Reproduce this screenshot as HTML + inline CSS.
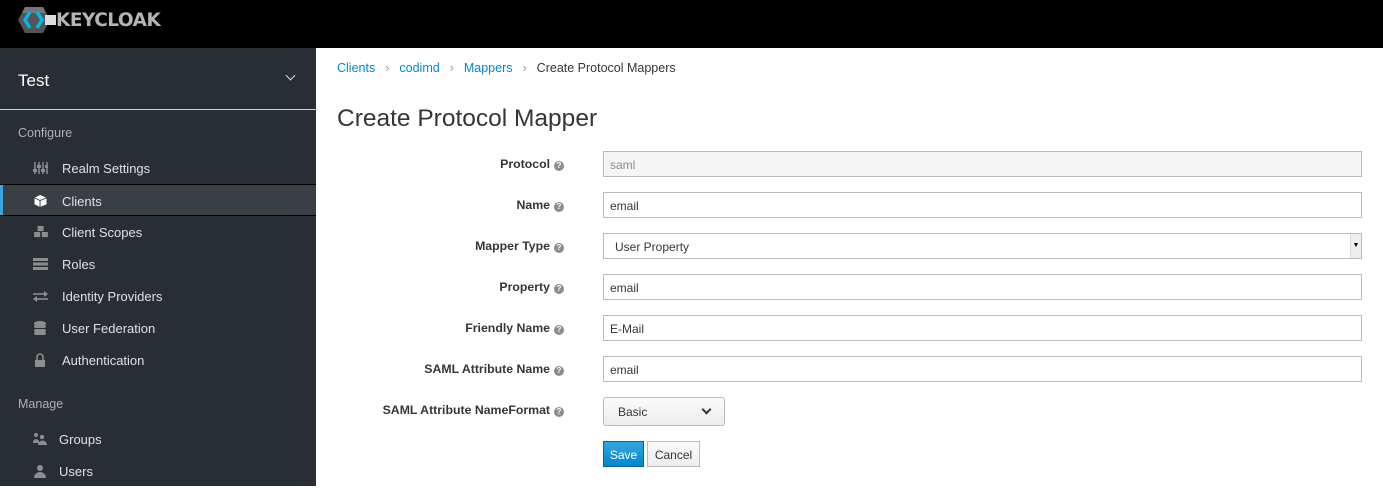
<!DOCTYPE html>
<html><head><style>
*{box-sizing:border-box;margin:0;padding:0}
body{width:1383px;height:486px;overflow:hidden;font-family:"Liberation Sans",sans-serif;font-size:12px;color:#363636;background:#fff;position:relative}
.hdr{position:absolute;left:0;top:0;width:1383px;height:48px;background:#000}
.logo{position:absolute;left:18px;top:6px;display:flex;align-items:center}
.logo span{color:#b5b5b5;font-weight:bold;font-size:18.5px;letter-spacing:-0.5px;margin-left:0px;font-family:"DejaVu Sans",sans-serif}
.side{position:absolute;left:0;top:48px;width:316px;height:438px;background:#292e34}
.realm{height:62px;border-bottom:1px solid #d1d1d1;color:#fff;font-size:17px;padding:23px 18px;position:relative}
.realm .ch{position:absolute;right:22px;top:24px;width:7px;height:7px;border-right:1.5px solid #ddd;border-bottom:1.5px solid #ddd;transform:rotate(45deg)}
.sec{color:#aeb0b3;font-size:12.5px;padding-left:18px;position:absolute}
.it{position:absolute;left:0;width:316px;height:32px;color:#dfe0e1;font-size:13px;line-height:33px;padding-left:62px}
.it.act{background:#393f44;border-top:1px solid #000;border-bottom:1px solid #000}
.it.act:before{content:"";position:absolute;left:0;top:0;width:3px;height:100%;background:#39a5dc}
.ic{position:absolute;left:33px;top:10px;width:15px;height:12px}
.bc{position:absolute;left:337px;top:61px;font-size:12.5px;color:#363636}
.bc a{color:#0088ce;text-decoration:none}
.bc i{color:#9c9c9c;font-style:normal;margin:0 10px}
h1{position:absolute;left:337px;top:105px;font-size:24.5px;font-weight:normal;color:#363636}
.lbl{position:absolute;right:819px;font-weight:bold;font-size:12.3px;color:#363636;white-space:nowrap}
.q{display:inline-block;width:10px;height:10px;border-radius:50%;background:#8b8d8f;color:#fff;font-size:8px;line-height:10px;text-align:center;margin-left:4px;vertical-align:0}
.inp{position:absolute;left:603px;width:759px;height:26px;border:1px solid #bbb;font-size:12px;padding:6px 6px;color:#363636}
.btn{position:absolute;font-size:12px}
</style></head><body>
<div class="hdr"><div class="logo">
<svg width="38" height="28" viewBox="0 0 38 28"><polygon points="7,1 25,1 32,14 25,27 7,27 0,14" fill="#555"/><polygon points="7,1 25,1 28,7 4,7" fill="#777"/><path d="M12,6 L7,14 L12,22" stroke="#00b9e4" stroke-width="3.5" fill="none"/><path d="M19,6 L24,14 L19,22" stroke="#00b9e4" stroke-width="3.5" fill="none"/><rect x="27" y="9" width="11" height="10" fill="#ddd"/></svg>
<span>KEYCLOAK</span></div></div>
<div class="side">
<div class="realm">Test<div class="ch"></div></div>
<div class="sec" style="top:78px">Configure</div>
<div class="it" style="top:104px"><svg class="ic" viewBox="0 0 15 12"><g stroke="#8b8d8f" stroke-width="1.5"><line x1="2" y1="0" x2="2" y2="12"/><line x1="6" y1="0" x2="6" y2="12"/><line x1="10" y1="0" x2="10" y2="12"/><line x1="14" y1="0" x2="14" y2="12"/></g><g fill="#8b8d8f"><rect x="0" y="7" width="4" height="3"/><rect x="4" y="3" width="4" height="3"/><rect x="8" y="7" width="4" height="3"/><rect x="12" y="3" width="3" height="3"/></g></svg>Realm Settings</div>
<div class="it act" style="top:136px"><svg class="ic" viewBox="0 0 15 13"><path d="M7,0 L14,3 L14,10 L7,13 L1,10 L1,3Z" fill="#fff"/><path d="M1,3 L7,6 L14,3 M7,6 L7,13" stroke="#393f44" fill="none"/></svg>Clients</div>
<div class="it" style="top:168px"><svg class="ic" viewBox="0 0 18 14" style="width:18px;left:32px"><g fill="#8b8d8f"><rect x="5" y="0" width="7" height="6"/><rect x="1" y="7" width="7" height="6"/><rect x="10" y="7" width="7" height="6"/></g></svg>Client Scopes</div>
<div class="it" style="top:200px"><svg class="ic" viewBox="0 0 15 12"><g fill="#8b8d8f"><rect y="0" width="15" height="3"/><rect y="4.5" width="15" height="3"/><rect y="9" width="15" height="3"/></g></svg>Roles</div>
<div class="it" style="top:232px"><svg class="ic" viewBox="0 0 15 12"><g stroke="#8b8d8f" stroke-width="1.6" fill="#8b8d8f"><line x1="0" y1="4" x2="12" y2="4"/><line x1="3" y1="9" x2="15" y2="9"/></g><polygon points="11,1 15,4 11,7" fill="#8b8d8f"/><polygon points="4,6 0,9 4,12" fill="#8b8d8f"/></svg>Identity Providers</div>
<div class="it" style="top:264px"><svg class="ic" viewBox="0 0 15 14" style="height:14px;top:9px"><g fill="#8b8d8f"><ellipse cx="7" cy="2.5" rx="6" ry="2.5"/><rect x="1" y="4" width="12" height="3" rx="2"/><rect x="1" y="8" width="12" height="3" rx="2"/><rect x="1" y="11" width="12" height="3" rx="2"/></g></svg>User Federation</div>
<div class="it" style="top:296px"><svg class="ic" viewBox="0 0 15 14" style="height:14px;top:9px"><path d="M5,7 V4 a3,3 0 0 1 6,0 V7" stroke="#8b8d8f" stroke-width="1.6" fill="none" transform="translate(-1,0)"/><rect x="2" y="7" width="10" height="7" fill="#8b8d8f"/></svg>Authentication</div>
<div class="sec" style="top:349px">Manage</div>
<div class="it" style="top:375px;padding-left:59px"><svg class="ic" viewBox="0 0 15 12"><g fill="#8b8d8f"><circle cx="3" cy="2" r="2"/><circle cx="9" cy="4" r="2.2"/><path d="M0,9 a3,3 0 0 1 6,0 V10 H0Z"/><path d="M5,12 a4,4 0 0 1 9,0Z"/></g></svg>Groups</div>
<div class="it" style="top:407px;padding-left:59px"><svg class="ic" viewBox="0 0 15 13" style="height:13px"><g fill="#8b8d8f"><circle cx="7" cy="3" r="3"/><path d="M1,13 a6,6 0 0 1 12,0Z"/></g></svg>Users</div>
</div>
<div class="bc"><a>Clients</a><i>›</i><a>codimd</a><i>›</i><a>Mappers</a><i>›</i>Create Protocol Mappers</div>
<h1>Create Protocol Mapper</h1>
<div class="lbl" style="top:157px">Protocol<span class="q">?</span></div>
<div class="inp" style="top:151px;background:#f5f5f5;color:#8b8d8f">saml</div>
<div class="lbl" style="top:198px">Name<span class="q">?</span></div>
<div class="inp" style="top:192px">email</div>
<div class="lbl" style="top:239px">Mapper Type<span class="q">?</span></div>
<div class="inp" style="top:233px;padding-left:11px">User Property<div style="position:absolute;right:0;top:0;width:11px;height:24px;background:#eee;border-left:1px solid #ddd;font-size:7px;text-align:center;line-height:24px;color:#000">▼</div></div>
<div class="lbl" style="top:280px">Property<span class="q">?</span></div>
<div class="inp" style="top:274px">email</div>
<div class="lbl" style="top:321px">Friendly Name<span class="q">?</span></div>
<div class="inp" style="top:315px">E-Mail</div>
<div class="lbl" style="top:362px">SAML Attribute Name<span class="q">?</span></div>
<div class="inp" style="top:356px">email</div>
<div class="lbl" style="top:403px">SAML Attribute NameFormat<span class="q">?</span></div>
<div class="btn" style="left:603px;top:397px;width:122px;height:29px;border:1px solid #bbb;border-radius:3px;background:linear-gradient(#fafafa,#ededed);padding:7px 14px">Basic<div style="position:absolute;right:14px;top:8px;width:7px;height:7px;border-right:2px solid #333;border-bottom:2px solid #333;transform:rotate(45deg)"></div></div>
<div class="btn" style="left:603px;top:441px;width:41px;height:26px;background:linear-gradient(#39a5dc,#0088ce);border:1px solid #00659c;color:#fff;padding:6px 0;text-align:center">Save</div>
<div class="btn" style="left:647px;top:441px;width:53px;height:26px;background:linear-gradient(#fafafa,#ededed);border:1px solid #bbb;padding:6px 0;text-align:center">Cancel</div>
</body></html>
